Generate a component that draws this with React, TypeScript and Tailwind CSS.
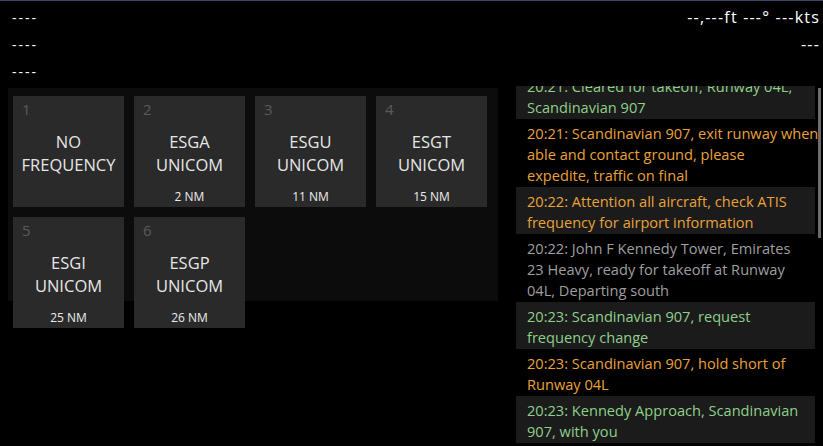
const tiles = [
  { n: 1, name: ["NO", "FREQUENCY"], dist: "" },
  { n: 2, name: ["ESGA", "UNICOM"], dist: "2 NM" },
  { n: 3, name: ["ESGU", "UNICOM"], dist: "11 NM" },
  { n: 4, name: ["ESGT", "UNICOM"], dist: "15 NM" },
  { n: 5, name: ["ESGI", "UNICOM"], dist: "25 NM" },
  { n: 6, name: ["ESGP", "UNICOM"], dist: "26 NM" },
];

type Msg = { tone: "green" | "orange" | "gray"; lines: string[] };

const log: Msg[] = [
  { tone: "green", lines: ["20:21: Cleared for takeoff, Runway 04L,", "Scandinavian 907"] },
  {
    tone: "orange",
    lines: ["20:21: Scandinavian 907, exit runway when", "able and contact ground, please", "expedite, traffic on final"],
  },
  { tone: "orange", lines: ["20:22: Attention all aircraft, check ATIS", "frequency for airport information"] },
  {
    tone: "gray",
    lines: ["20:22: John F Kennedy Tower, Emirates", "23 Heavy, ready for takeoff at Runway", "04L, Departing south"],
  },
  { tone: "green", lines: ["20:23: Scandinavian 907, request", "frequency change"] },
  { tone: "orange", lines: ["20:23: Scandinavian 907, hold short of", "Runway 04L"] },
  { tone: "green", lines: ["20:23: Kennedy Approach, Scandinavian", "907, with you"] },
];

const toneClass = {
  green: "text-[#8fcf8a]",
  orange: "text-[#e9a23b]",
  gray: "text-[#9f9f9f]",
};

function Tile({ t }: { t: (typeof tiles)[number] }) {
  return (
    <div className="relative flex h-[111px] w-[111px] flex-col items-center bg-[#2a2a2a]">
      <span className="absolute left-[9px] top-[3px] text-[15px] leading-[20px] text-[#5a5a5a]">{t.n}</span>
      <div className="mt-[34px] flex flex-col items-center text-[16.5px] leading-[23px] text-[#e6e6e6]">
        {t.name.map((l) => (
          <span key={l}>{l}</span>
        ))}
      </div>
      {t.dist && <span className="mt-[13px] text-[12px] leading-[16px] text-[#ececec]">{t.dist}</span>}
    </div>
  );
}

export default function App() {
  return (
    <div className="h-[446px] w-[823px] overflow-hidden border-t border-[#3a4466] bg-black font-['Open_Sans',sans-serif] text-white">
      <div className="flex h-[85px] justify-between">
        <div className="flex flex-col pl-[12px] pt-[3px] text-[14px] leading-[27px] tracking-[2px]">
          <span>----</span>
          <span>----</span>
          <span>----</span>
        </div>
        <div className="flex flex-col items-end pr-[3px] pt-[3px] text-[16px] leading-[27px] tracking-[1.2px]">
          <span>--,---ft ---° ---kts</span>
          <span>---</span>
        </div>
      </div>

      <div className="flex items-start">
        <div className="ml-[8px] mt-[2px] h-[213px] w-[490px] bg-[#0c0c0c] pl-[5px] pt-[8px]">
          <div className="grid grid-cols-[repeat(4,111px)] gap-[10px]">
            {tiles.map((t) => (
              <Tile key={t.n} t={t} />
            ))}
          </div>
        </div>

        <div className="ml-[18px] flex h-[357px] w-[307px]">
          <div className="flex w-[299px] flex-col justify-end overflow-x-visible overflow-y-clip">
            <div className="flex shrink-0 flex-col">
              {log.map((m, i) => (
                <div
                  key={i}
                  className={`pb-[1px] pl-[11px] pt-[4px] text-[14.6px] leading-[21px] ${toneClass[m.tone]} ${
                    i % 2 === 0 ? "bg-[#1b1b1b]" : "bg-black"
                  }`}
                >
                  {m.lines.map((l) => (
                    <div key={l} className="whitespace-nowrap">
                      {l}
                    </div>
                  ))}
                </div>
              ))}
            </div>
          </div>
          <div className="ml-[3px] w-[3px]">
            <div className="mt-[2px] h-[150px] bg-[#6b6b6b]" />
          </div>
        </div>
      </div>
    </div>
  );
}
